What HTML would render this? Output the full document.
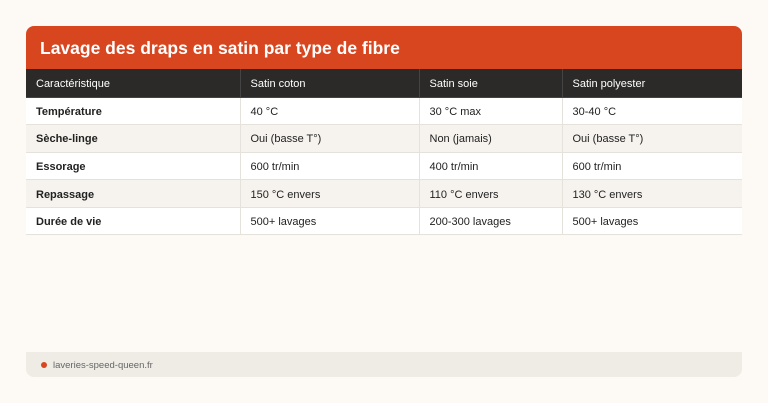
<!DOCTYPE html><html><head><style>
body{margin:0;width:768px;height:403px;background:#fdf9f5;font-family:"Liberation Sans",sans-serif;position:relative;overflow:hidden}
.t{position:absolute;left:26px;top:26px;width:716px;height:43px;background:#d8461f;border-radius:8px 8px 0 0;color:#fff;font-size:17.5px;font-weight:bold;line-height:44px;padding-left:14px;box-sizing:border-box}
table{position:absolute;left:26px;top:69px;width:716px;border-collapse:collapse;font-size:11px;color:#222}
td,th{height:27.6px;padding:2px 0 0 10px;text-align:left;vertical-align:middle;border-right:1px solid #e5e2dc;border-bottom:1px solid #e5e2dc;box-sizing:border-box}
th{background:#2b2a28;color:#fff;font-weight:normal;height:28px;border-color:#444}
tr td{background:#fff}
tr:nth-child(odd) td{background:#f6f3ee}
td:first-child{font-weight:bold}
td:last-child,th:last-child{border-right:none}
.f{position:absolute;left:26px;top:352px;width:716px;height:25px;background:#efece6;border-radius:0 0 8px 8px;font-size:9.5px;color:#666;line-height:27px;padding-left:27px;box-sizing:border-box}
.f:before{content:"";position:absolute;left:15px;top:10px;width:6px;height:6px;border-radius:50%;background:#d8461f}
</style></head><body>
<div class="t">Lavage des draps en satin par type de fibre</div>
<table>
<tr><th style="width:214px">Caractéristique</th><th style="width:179px">Satin coton</th><th style="width:143px">Satin soie</th><th>Satin polyester</th></tr>
<tr><td>Température</td><td>40 °C</td><td>30 °C max</td><td>30-40 °C</td></tr>
<tr><td>Sèche-linge</td><td>Oui (basse T°)</td><td>Non (jamais)</td><td>Oui (basse T°)</td></tr>
<tr><td>Essorage</td><td>600 tr/min</td><td>400 tr/min</td><td>600 tr/min</td></tr>
<tr><td>Repassage</td><td>150 °C envers</td><td>110 °C envers</td><td>130 °C envers</td></tr>
<tr><td>Durée de vie</td><td>500+ lavages</td><td>200-300 lavages</td><td>500+ lavages</td></tr>
</table>
<div class="f">laveries-speed-queen.fr</div>
</body></html>
